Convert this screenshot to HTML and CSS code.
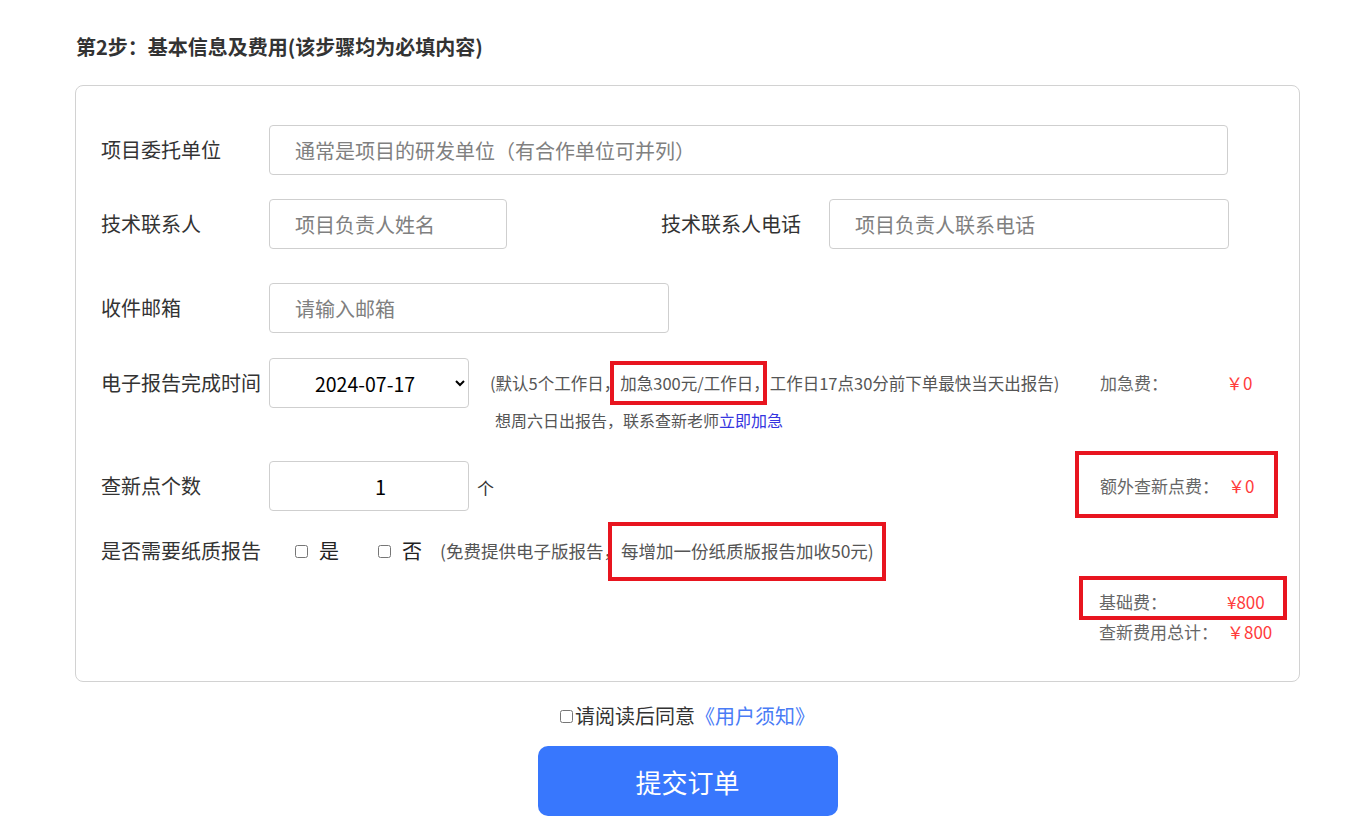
FILE: index.html
```html
<!DOCTYPE html>
<html lang="zh-CN">
<head>
<meta charset="utf-8">
<title>第2步</title>
<link rel="stylesheet" href="styles.css">
</head>
<body>
<div class="page">
  <h2 class="step-title">第2步：基本信息及费用(该步骤均为必填内容)</h2>
  <div class="card">
    <div class="row row1">
      <label class="label">项目委托单位</label>
      <input class="field w-full" type="text" placeholder="通常是项目的研发单位（有合作单位可并列）">
    </div>
    <div class="row row2">
      <label class="label">技术联系人</label>
      <input class="field w-small" type="text" placeholder="项目负责人姓名">
      <label class="label label-2">技术联系人电话</label>
      <input class="field w-mid" type="text" placeholder="项目负责人联系电话">
    </div>
    <div class="row row3">
      <label class="label">收件邮箱</label>
      <input class="field w-mid" type="text" placeholder="请输入邮箱">
    </div>
    <div class="row row4">
      <label class="label">电子报告完成时间</label>
      <select class="field select">
        <option>2024-07-17</option>
      </select>
      <div class="notes">
        <div class="note-1">(默认5个工作日，<span class="mark mark-a">加急300元/工作日，</span>工作日17点30分前下单最快当天出报告)</div>
        <div class="note-2">想周六日出报告，联系查新老师<a class="urgent" href="#">立即加急</a></div>
      </div>
      <div class="fee fee-top"><span class="fee-label">加急费：</span><span class="amount">￥0</span></div>
    </div>
    <div class="row row5">
      <label class="label">查新点个数</label>
      <input class="field num" type="text" value="1">
      <span class="unit">个</span>
      <div class="fee-spacer"></div>
      <div class="fee"><span class="mark mark-b"><span class="fee-label">额外查新点费：</span><span class="amount">￥0</span></span></div>
    </div>
    <div class="row row6">
      <label class="label">是否需要纸质报告</label>
      <input class="cb cb-yes" type="checkbox"><span class="opt">是</span>
      <input class="cb cb-no" type="checkbox"><span class="opt">否</span>
      <span class="paper-note">(免费提供电子版报告，<span class="mark mark-c">每增加一份纸质版报告加收50元)</span></span>
    </div>
    <div class="totals">
      <div class="fee"><span class="mark mark-d"><span class="fee-label">基础费：</span><span class="amount">¥800</span></span></div>
      <div class="fee"><span class="fee-label">查新费用总计：</span><span class="amount">￥800</span></div>
    </div>
  </div>
  <div class="agree"><input class="cb agree-cb" type="checkbox"><span>请阅读后同意</span><a class="notice" href="#">《用户须知》</a></div>
  <div class="submit-wrap"><button class="submit" type="button">提交订单</button></div>
</div>
</body>
</html>
```
FILE: styles.css
```css
* { box-sizing: border-box; }
body {
  margin: 0;
  background: #fff;
  font-family: "Noto Sans CJK SC", "Noto Sans", sans-serif;
  color: #333;
}
.page {
  width: 1225px;
  margin-left: 75px;
  padding-top: 33px;
}
.step-title {
  margin: 0 0 24px 1px;
  font-size: 20px;
  line-height: 28px;
  font-weight: bold;
  color: #333;
}
.card {
  border: 1px solid #d2d2d2;
  border-radius: 8px;
  padding: 39px 25px 34px 25px;
}
.row {
  display: flex;
  align-items: center;
}
.label {
  width: 168px;
  flex: none;
  font-size: 20px;
  line-height: 30px;
  color: #333;
}
.field {
  height: 50px;
  border: 1px solid #cfcfcf;
  border-radius: 4px;
  padding: 0 25px;
  font-family: inherit;
  font-size: 20px;
  color: #000;
  background: #fff;
  outline: none;
}
.field::placeholder { color: #808080; }
.w-full { width: 959px; }
.w-small { width: 238px; }
.w-mid { width: 400px; }
.label-2 { margin-left: 154px; }
.row2 { margin-top: 24px; }
.row3 { margin-top: 34px; }
.row4 { margin-top: 25px; align-items: flex-start; }
.row4 .label { margin-top: 10px; }
.select {
  width: 200px;
  padding: 0 6px 0 10px;
  font-size: 19.5px;
  text-align-last: center;
  color: #000;
}
.notes {
  margin-left: 21px;
  width: 609px;
  color: #555;
}
.note-1 {
  height: 50px;
  line-height: 50px;
  font-size: 16.5px;
  white-space: nowrap;
}
.note-2 {
  line-height: 24px;
  font-size: 16px;
  margin-left: 5px;
}
.urgent { color: #3535e0; text-decoration: none; }
.mark { position: relative; }
.mark::after {
  content: "";
  position: absolute;
  border: 4px solid #e8151f;
  pointer-events: none;
}
.mark-a::after { left: -10px; right: 3px; top: -10px; bottom: -10px; }
.mark-b::after { left: -25px; right: -24px; top: -20px; bottom: -17px; }
.mark-c::after { left: -13px; right: -12px; top: -16px; bottom: -18px; }
.mark-d::after { left: -20px; right: -22px; top: -11px; bottom: -3px; }
.fee {
  display: flex;
  font-size: 17px;
  line-height: 30px;
  color: #666;
  white-space: nowrap;
}
.fee > .mark { display: flex; }
.fee-label { width: 128px; flex: none; }
.fee-top .fee-label { width: 126px; }
.amount { color: #ff3b3b; }
.fee-top { margin-left: auto; margin-top: 10px; width: 174px; }
.row5 { margin-top: 29px; }
.num {
  width: 200px;
  padding: 0 14px 0 37px;
  text-align: center;
}
.unit {
  margin-left: 8px;
  font-size: 17px;
  color: #333;
  margin-top: 2px;
}
.fee-spacer { flex: 1; }
.row5 .fee { width: 174px; }
.row6 { margin-top: 25px; }
.cb {
  width: 13px;
  height: 13px;
  margin: 0;
  flex: none;
}
.cb-yes { margin-left: 26px; }
.cb-no { margin-left: 39px; }
.opt {
  margin-left: 11px;
  font-size: 20px;
  line-height: 30px;
  color: #222;
}
.paper-note {
  margin-left: 18px;
  font-size: 17.5px;
  line-height: 30px;
  color: #555;
  white-space: nowrap;
}
.totals {
  margin-top: 21px;
  margin-left: 998px;
  width: 174px;
}
.agree {
  margin-top: 19px;
  display: flex;
  align-items: center;
  justify-content: center;
  font-size: 20px;
  line-height: 30px;
  color: #333;
}
.agree-cb { margin-right: 2px; }
.notice { color: #4a7cf6; text-decoration: none; }
.submit-wrap {
  margin-top: 15px;
  display: flex;
  justify-content: center;
}
.submit {
  width: 300px;
  height: 70px;
  border: none;
  border-radius: 10px;
  background: #3877fd;
  color: #fff;
  font-family: inherit;
  font-size: 26px;
}
```
